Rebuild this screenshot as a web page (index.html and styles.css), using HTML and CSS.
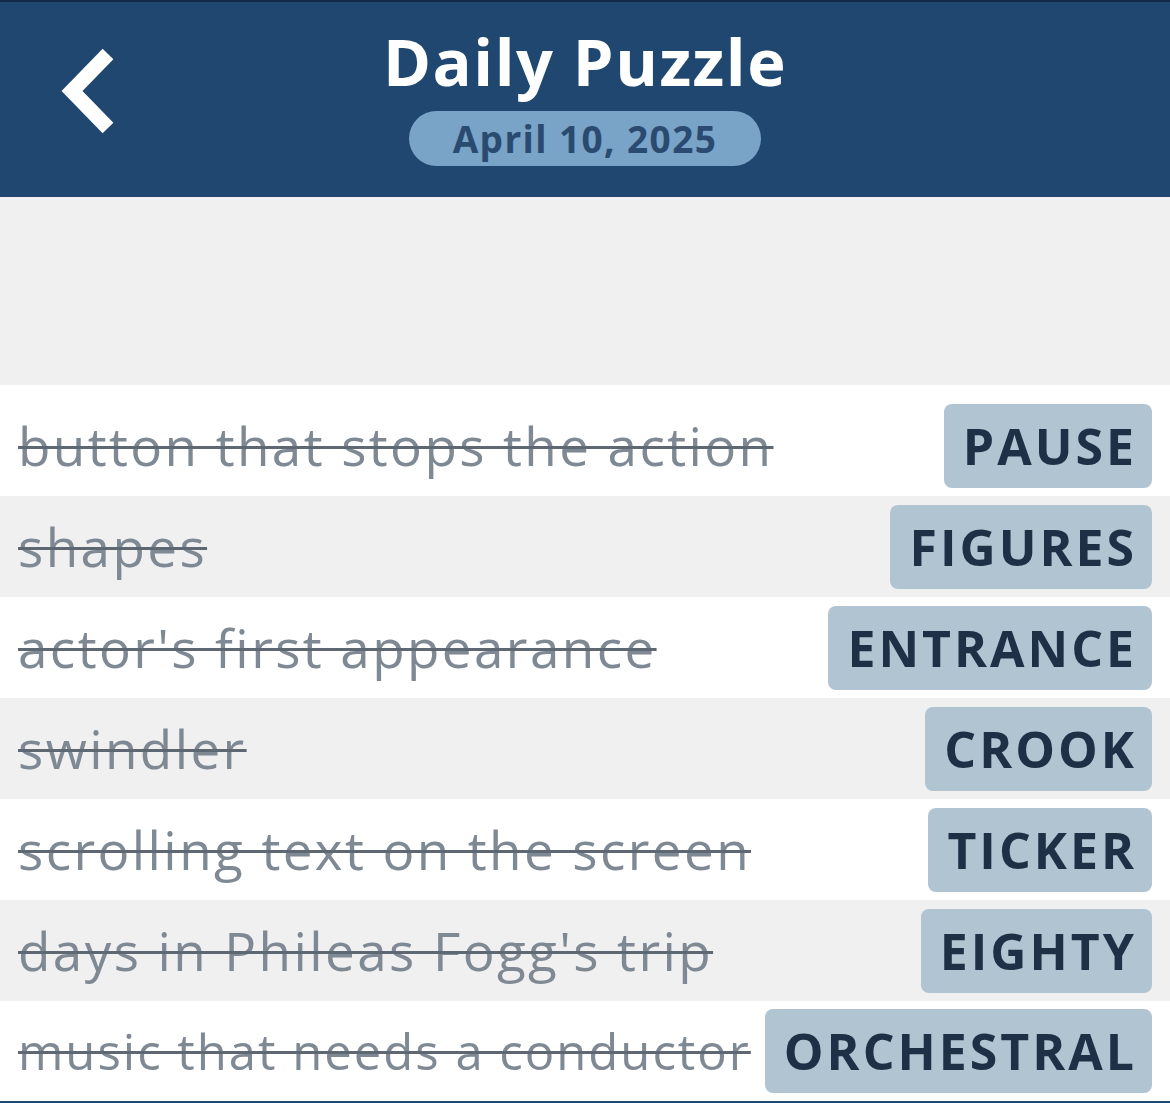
FILE: index.html
```html
<!DOCTYPE html>
<html lang="en">
<head>
<meta charset="utf-8">
<title>Daily Puzzle</title>
<link rel="stylesheet" href="styles.css">
</head>
<body>
<header class="topbar">
  <div class="back">
    <svg width="70" height="100" viewBox="0 0 70 100" aria-hidden="true">
      <polyline points="50,12 14,49 50,86" fill="none" stroke="#ffffff" stroke-width="15" stroke-linecap="butt" stroke-linejoin="miter"/>
    </svg>
  </div>
  <div class="title-block">
    <h1 class="title">Daily Puzzle</h1>
    <div class="date">April 10, 2025</div>
  </div>
  <div class="side"></div>
</header>
<div class="spacer"></div>
<main class="list">
  <div class="row light first"><span class="clue">button that stops the action</span><span class="answer">PAUSE</span></div>
  <div class="row grey"><span class="clue">shapes</span><span class="answer">FIGURES</span></div>
  <div class="row light"><span class="clue">actor's first appearance</span><span class="answer">ENTRANCE</span></div>
  <div class="row grey"><span class="clue">swindler</span><span class="answer">CROOK</span></div>
  <div class="row light"><span class="clue">scrolling text on the screen</span><span class="answer">TICKER</span></div>
  <div class="row grey"><span class="clue">days in Phileas Fogg's trip</span><span class="answer">EIGHTY</span></div>
  <div class="row light last"><span class="clue fit">music that needs a conductor</span><span class="answer">ORCHESTRAL</span></div>
</main>
<div class="bottomline"></div>
</body>
</html>
```
FILE: styles.css
```css
html, body {
  margin: 0;
  padding: 0;
}
body {
  width: 1170px;
  height: 1103px;
  overflow: hidden;
  background: #f0f0f0;
  font-family: "Open Sans", "Lato", sans-serif;
}
.topbar {
  height: 195px;
  border-top: 2px solid #13294a;
  background: #1f4770;
  display: grid;
  grid-template-columns: 1fr auto 1fr;
  align-items: start;
}
.back {
  padding-top: 40px;
  padding-left: 58px;
}
.back svg {
  display: block;
}
.title-block {
  display: flex;
  flex-direction: column;
  align-items: center;
}
.title {
  margin: 18px 0 0 0;
  color: #ffffff;
  font-size: 65px;
  font-weight: 700;
  line-height: 82px;
  letter-spacing: 1.5px;
}
.date {
  margin-top: 9px;
  background: #79a3c7;
  color: #2a4a70;
  font-size: 37px;
  font-weight: 700;
  line-height: 55px;
  width: 352px;
  text-align: center;
  border-radius: 28px;
  letter-spacing: 1.4px;
}
.spacer {
  height: 188px;
  background: #f0f0f0;
}
.list {
  display: flex;
  flex-direction: column;
}
.row {
  height: 101px;
  box-sizing: border-box;
  padding: 0 18px;
  display: flex;
  align-items: center;
  justify-content: space-between;
}
.row.first {
  height: 111px;
  padding-top: 10px;
}
.row.last {
  height: 100px;
}
.light {
  background: #ffffff;
}
.grey {
  background: #f0f0f0;
}
.clue {
  color: #7f8994;
  font-size: 53px;
  font-weight: 400;
  white-space: nowrap;
  text-decoration: line-through;
  text-decoration-color: #5e6873;
  text-decoration-thickness: 3px;
  letter-spacing: 2.4px;
}
.clue.fit {
  font-size: 49px;
  letter-spacing: 2px;
}
.answer {
  background: #b1c4d2;
  color: #1d3045;
  font-size: 50px;
  font-weight: 700;
  line-height: 84px;
  height: 84px;
  padding: 0 15px 0 19px;
  border-radius: 8px;
  white-space: nowrap;
  letter-spacing: 3px;
}
.bottomline {
  height: 2px;
  background: #1f4770;
}
```
